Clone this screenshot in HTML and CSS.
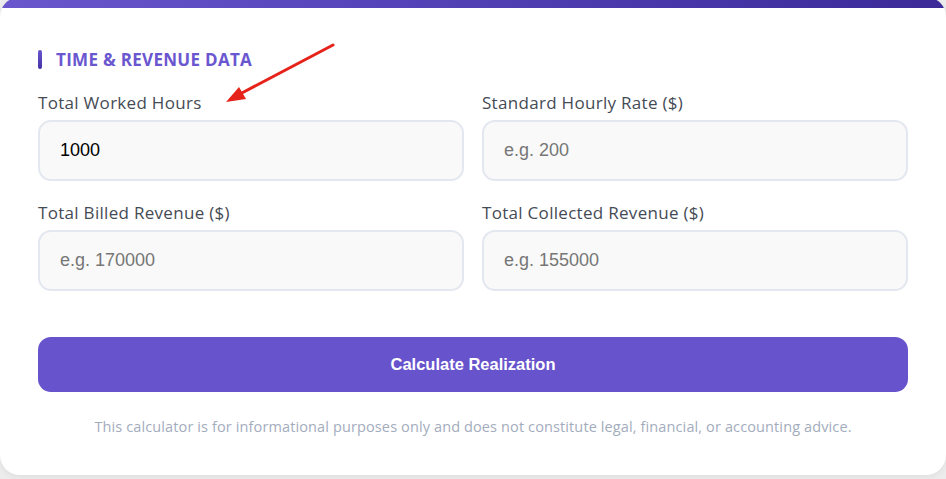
FILE: index.html
```html
<!DOCTYPE html>
<html lang="en">
<head>
<meta charset="utf-8">
<title>Realization Calculator</title>
<link rel="stylesheet" href="styles.css">
</head>
<body>
<div class="card">
  <div class="section-title"><span class="accent"></span><span>TIME &amp; REVENUE DATA</span></div>
  <div class="grid">
    <div class="field">
      <label class="label" for="hours">Total Worked Hours</label>
      <input class="input" id="hours" type="text" value="1000">
    </div>
    <div class="field">
      <label class="label" for="rate">Standard Hourly Rate ($)</label>
      <input class="input" id="rate" type="text" placeholder="e.g. 200">
    </div>
    <div class="field">
      <label class="label" for="billed">Total Billed Revenue ($)</label>
      <input class="input" id="billed" type="text" placeholder="e.g. 170000">
    </div>
    <div class="field">
      <label class="label" for="collected">Total Collected Revenue ($)</label>
      <input class="input" id="collected" type="text" placeholder="e.g. 155000">
    </div>
  </div>
  <button class="btn" type="button">Calculate Realization</button>
  <p class="disclaimer">This calculator is for informational purposes only and does not constitute legal, financial, or accounting advice.</p>
</div>
<svg class="annotation" width="946" height="479" viewBox="0 0 946 479" aria-hidden="true">
  <line x1="333" y1="45" x2="240" y2="94" stroke="#e5231b" stroke-width="3" stroke-linecap="round"/>
  <polygon points="226,102 239,87 246,99" fill="#e5231b"/>
</svg>
</body>
</html>
```
FILE: styles.css
```css
html, body {
  margin: 0;
  padding: 0;
}
body {
  background: #ececec;
  width: 946px;
  height: 479px;
  overflow: hidden;
  position: relative;
  font-family: "Open Sans", "Noto Sans", sans-serif;
}
.card {
  box-sizing: border-box;
  width: 946px;
  margin-top: -3px;
  padding: 53px 38px 38px;
  border-radius: 20px;
  background: linear-gradient(90deg, #6a56cd 0%, #5040b4 50%, #3c2a98 100%) top / 100% 11px no-repeat, #ffffff;
  box-shadow: 0 2px 6px rgba(0, 0, 0, 0.06);
}
.section-title {
  display: flex;
  align-items: center;
  gap: 14px;
  height: 19px;
  color: #6a57cf;
  font-size: 17px;
  font-weight: 700;
  letter-spacing: 0.3px;
}
.accent {
  width: 4px;
  height: 19px;
  border-radius: 2px;
  background: linear-gradient(180deg, #6a56cd, #4632a6);
}
.grid {
  display: grid;
  grid-template-columns: 1fr 1fr;
  column-gap: 18px;
  row-gap: 21px;
  margin-top: 23px;
}
.field {
  display: flex;
  flex-direction: column;
}
.label {
  font-size: 17px;
  line-height: 22px;
  color: #454b55;
  margin-bottom: 6px;
  letter-spacing: 0.3px;
}
.input {
  box-sizing: border-box;
  height: 61px;
  padding: 0 20px;
  border: 2px solid #e3e7ef;
  border-radius: 13px;
  background: #f9f9f9;
  font-family: "Liberation Sans", Arial, sans-serif;
  font-size: 18px;
  color: #000;
  outline: none;
}
.input::placeholder {
  color: #767676;
}
.btn {
  display: block;
  width: 100%;
  height: 55px;
  margin-top: 46px;
  border: 0;
  border-radius: 13px;
  background: #6753cc;
  color: #fff;
  font-family: "Liberation Sans", Arial, sans-serif;
  font-size: 16.5px;
  font-weight: 700;
}
.disclaimer {
  margin: 25px 0 0;
  text-align: center;
  font-size: 14.5px;
  line-height: 20px;
  letter-spacing: 0.12px;
  color: #a3acbd;
}
.annotation {
  position: absolute;
  left: 0;
  top: 0;
  pointer-events: none;
}
```
